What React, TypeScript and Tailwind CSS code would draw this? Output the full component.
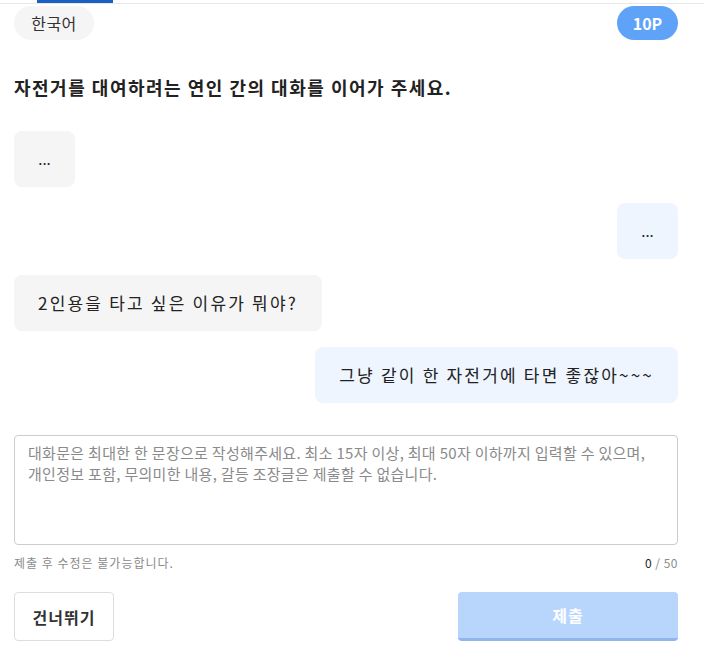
import { useState } from "react";

const messages = [
  { side: "left", text: "..." },
  { side: "right", text: "..." },
  { side: "left", text: "2인용을 타고 싶은 이유가 뭐야?" },
  { side: "right", text: "그냥 같이 한 자전거에 타면 좋잖아~~~" },
];

const App = () => {
  const [value, setValue] = useState("");

  return (
    <div
      className="min-h-screen bg-white text-[#222]"
      style={{ fontFamily: '"Noto Sans CJK KR", "Noto Sans", sans-serif' }}
    >
      {/* tab indicator strip */}
      <div className="h-[4px] border-b border-[#e8e8e8]">
        <div className="ml-[37px] h-[3px] w-[76px] bg-[#1a5fc2]" />
      </div>

      <main className="flex flex-col pl-[14px] pr-[26px]">
        <div className="mt-[2px] flex h-[34px] items-center justify-between">
          <span className="flex h-full w-[80px] items-center justify-center rounded-full bg-[#f5f5f5] text-[16px] tracking-[0.5px] text-[#333]">
            한국어
          </span>
          <span className="flex h-full w-[61px] items-center justify-center rounded-full bg-[#5fa3f8] text-[16px] font-bold text-white">
            10P
          </span>
        </div>

        <h1 className="mt-[35px] text-[18px] font-bold leading-[24px] tracking-[1.5px] text-[#222]">
          자전거를 대여하려는 연인 간의 대화를 이어가 주세요.
        </h1>

        <div className="mt-[32px] flex flex-col gap-4">
          {messages.map((m, i) => {
            const dots = m.text === "...";
            return (
              <div key={i} className={m.side === "left" ? "flex justify-start" : "flex justify-end"}>
                <div
                  className={
                    (m.side === "left" ? "bg-[#f5f5f5] " : "bg-[#eef5ff] ") +
                    (dots
                      ? "flex h-[56px] w-[61px] items-center justify-center rounded-lg text-[15px] text-[#222]"
                      : "flex h-[56px] items-center justify-center rounded-lg px-6 text-[17px] tracking-[2.2px] text-[#222]")
                  }
                >
                  {m.text}
                </div>
              </div>
            );
          })}
        </div>

        <textarea
          value={value}
          onChange={(e) => setValue(e.target.value.slice(0, 50))}
          placeholder="대화문은 최대한 한 문장으로 작성해주세요. 최소 15자 이상, 최대 50자 이하까지 입력할 수 있으며, 개인정보 포함, 무의미한 내용, 갈등 조장글은 제출할 수 없습니다."
          className="mt-[32px] h-[110px] w-full resize-none break-keep rounded border border-[#cccccc] px-[13px] py-[6px] text-[15px] leading-[21px] tracking-[0.3px] text-[#222] outline-none placeholder:text-[#8a8a8a]"
          style={{ fontFamily: '"Noto Sans CJK KR", "Noto Sans", sans-serif' }}
        />

        <div className="mt-[10px] flex h-[16px] items-center justify-between text-[12px] tracking-[1px] text-[#8a8a8a]">
          <span>제출 후 수정은 불가능합니다.</span>
          <span className="tracking-[0.5px]">
            <span className="text-[#222]">{value.length}</span> / 50
          </span>
        </div>

        <div className="mt-[21px] flex items-center justify-between">
          <button className="h-[49px] w-[100px] rounded-sm border border-[#dddddd] bg-white text-base font-bold tracking-[1px] text-[#333]">
            건너뛰기
          </button>
          <button
            disabled
            className="h-[49px] w-[220px] rounded-sm border-b-[3px] border-[#8fb6ee] bg-[#b8d5fc] text-base font-bold tracking-[1px] text-white"
          >
            제출
          </button>
        </div>
      </main>
    </div>
  );
};

export default App;
